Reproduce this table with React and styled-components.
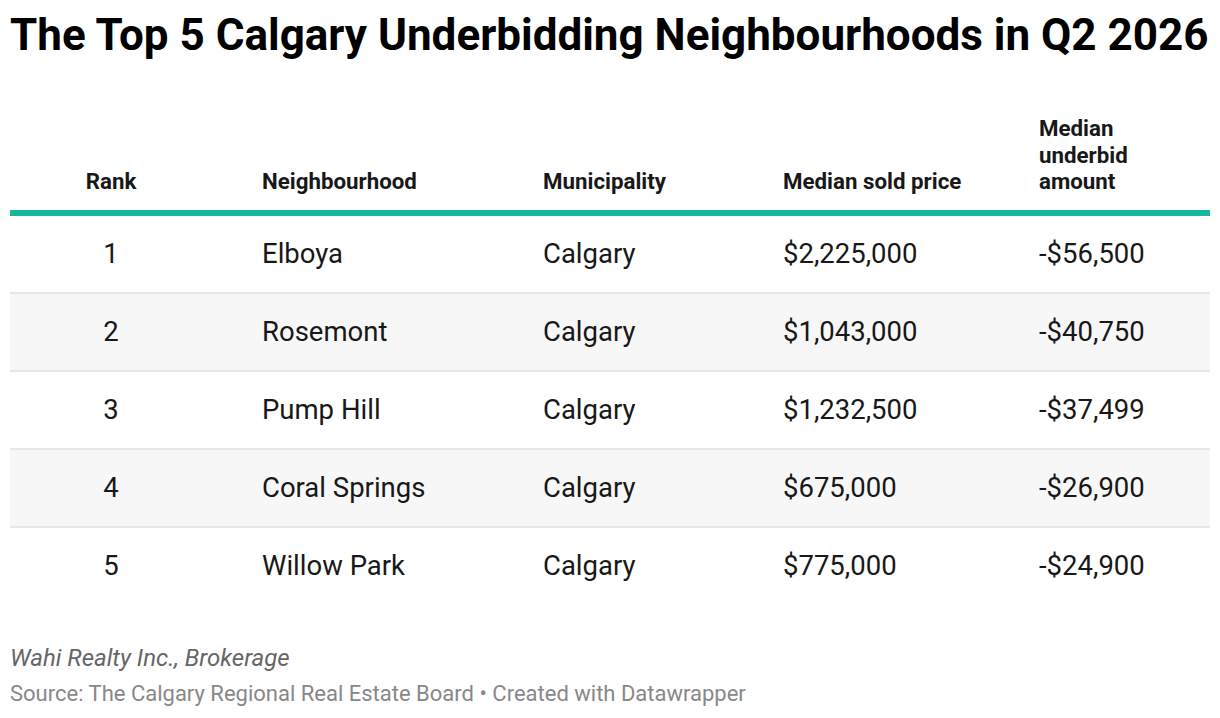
import React from "react";
import styled, { createGlobalStyle } from "styled-components";

const Global = createGlobalStyle`
  html, body { margin: 0; padding: 0; background: #fff; }
  body { font-family: Roboto, "Liberation Sans", sans-serif; color: #181818; }
`;

const Page = styled.div`
  padding: 10px 10px 0 10px;
  width: 1200px;
`;

const Title = styled.h1`
  margin: 0;
  font-size: 44px;
  line-height: 50px;
  font-weight: 700;
  color: #000;
  white-space: nowrap;
`;

const Table = styled.div`
  margin-top: 55px;
  display: grid;
  grid-template-columns: 202px 281px 240px 256px 1fr;
`;

const HeadCell = styled.div`
  display: flex;
  align-items: flex-end;
  justify-content: ${(p) => (p.$center ? "center" : "flex-start")};
  padding: 0 0 15px ${(p) => (p.$center ? "0" : "50px")};
  font-size: 22.3px;
  line-height: 26.5px;
  font-weight: 700;
  color: #181818;
  border-bottom: 6px solid #13b99e;
`;

const Cell = styled.div`
  height: 76px;
  display: flex;
  align-items: center;
  justify-content: ${(p) => (p.$center ? "center" : "flex-start")};
  padding-left: ${(p) => (p.$center ? "0" : "50px")};
  font-size: 27.5px;
  color: #181818;
  background: ${(p) => (p.$alt ? "#f7f7f7" : "#fff")};
  border-bottom: 2px solid ${(p) => (p.$last ? "transparent" : "#e6e6e6")};
`;

const Footer = styled.div`
  margin-top: 38px;
  display: flex;
  flex-direction: column;
  gap: 9px;
`;

const Byline = styled.div`
  font-size: 24px;
  line-height: 28px;
  font-style: italic;
  color: #666;
`;

const Source = styled.div`
  font-size: 22px;
  line-height: 26px;
  color: #888;
`;

const rows = [
  ["1", "Elboya", "Calgary", "$2,225,000", "-$56,500"],
  ["2", "Rosemont", "Calgary", "$1,043,000", "-$40,750"],
  ["3", "Pump Hill", "Calgary", "$1,232,500", "-$37,499"],
  ["4", "Coral Springs", "Calgary", "$675,000", "-$26,900"],
  ["5", "Willow Park", "Calgary", "$775,000", "-$24,900"],
];

export default function App() {
  return (
    <Page>
      <Global />
      <Title>The Top 5 Calgary Underbidding Neighbourhoods in Q2 2026</Title>
      <Table>
        <HeadCell $center>Rank</HeadCell>
        <HeadCell>Neighbourhood</HeadCell>
        <HeadCell>Municipality</HeadCell>
        <HeadCell>Median sold price</HeadCell>
        <HeadCell>
          Median
          <br />
          underbid
          <br />
          amount
        </HeadCell>
        {rows.map((r, i) =>
          r.map((v, j) => (
            <Cell key={i + "-" + j} $center={j === 0} $alt={i % 2 === 1} $last={i === rows.length - 1}>
              {v}
            </Cell>
          ))
        )}
      </Table>
      <Footer>
        <Byline>Wahi Realty Inc., Brokerage</Byline>
        <Source>Source: The Calgary Regional Real Estate Board • Created with Datawrapper</Source>
      </Footer>
    </Page>
  );
}
